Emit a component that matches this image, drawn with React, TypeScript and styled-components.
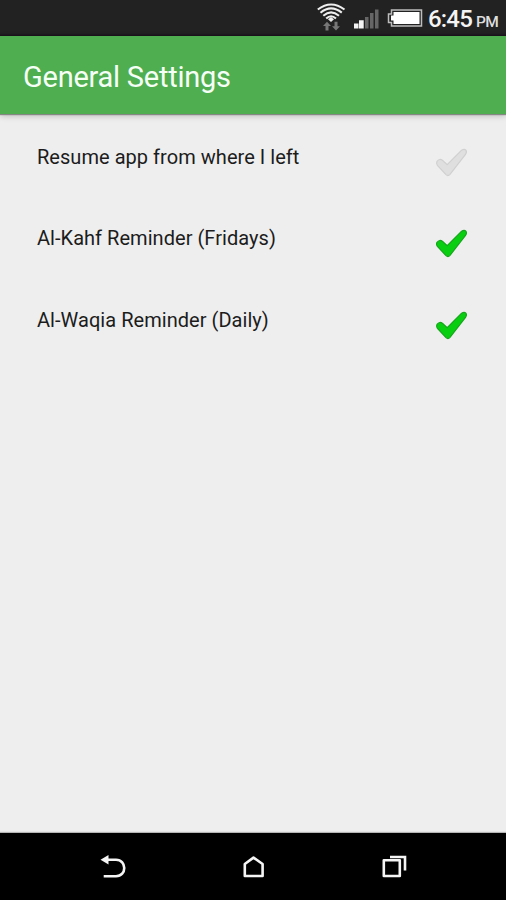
import React from 'react';
import styled, { createGlobalStyle } from 'styled-components';

const GlobalStyle = createGlobalStyle`
  * { box-sizing: border-box; }
  body { margin: 0; background: #eee; }
`;

const Screen = styled.div`
  display: flex;
  flex-direction: column;
  width: 506px;
  height: 900px;
  background: #eeeeee;
  font-family: Roboto, sans-serif;
  overflow: hidden;
`;

const StatusBar = styled.header`
  display: flex;
  flex: none;
  height: 36px;
  background: linear-gradient(#222222 33px, #1a101b 36px);
  padding-left: 316px;
  color: #f4f4f4;
`;

const StatusIcons = styled.svg`
  flex: none;
  width: 110px;
  height: 36px;
`;

const Clock = styled.div`
  display: flex;
  align-items: baseline;
  height: 36px;
  margin-left: 2px;
  line-height: 38px;
  white-space: nowrap;
`;

const Time = styled.span`
  font-size: 24px;
  font-weight: 500;
  letter-spacing: -0.8px;
`;

const Meridiem = styled.span`
  margin-left: 4px;
  color: #dedede;
  font-size: 15.5px;
  font-weight: 500;
  letter-spacing: -0.6px;
`;

const AppBar = styled.div`
  display: flex;
  flex: none;
  align-items: center;
  height: 78px;
  padding: 4px 0 0 23px;
  background: #4fae50;
  box-shadow: 0 1px 1px #858785, 0 2px 6px rgba(0, 0, 0, 0.22);
`;

const Title = styled.h1`
  margin: 0;
  color: #f6fff6;
  font-size: 29px;
  font-weight: 400;
  letter-spacing: -0.25px;
  line-height: 36px;
  white-space: nowrap;
`;

const Options = styled.main`
  display: flex;
  flex: 1;
  flex-direction: column;
  padding-top: 2px;
`;

const Option = styled.label`
  display: flex;
  align-items: flex-start;
  justify-content: space-between;
  height: 81.4px;
  padding: 29px 36px 0 37px;
`;

const OptionLabel = styled.span`
  color: #1c1c1c;
  font-size: 20px;
  line-height: 24px;
  letter-spacing: 0.04px;
  white-space: nowrap;
`;

const Check = styled.svg`
  flex: none;
  width: 36px;
  height: 34px;
`;

const NavBar = styled.nav`
  display: flex;
  flex: none;
  align-items: center;
  justify-content: space-between;
  height: 67px;
  padding: 0 96px;
  background: #000;
  box-shadow: 0 -1px 1px #b5b5b5;
`;

const NavIcon = styled.svg`
  width: 32px;
  height: 32px;
  fill: none;
  stroke: #f5f5f5;
  stroke-width: 2.6;
`;

const options = [
  { label: 'Resume app from where I left', checked: false },
  { label: 'Al-Kahf Reminder (Fridays)', checked: true },
  { label: 'Al-Waqia Reminder (Daily)', checked: true },
];

function CheckMark({ checked }: { checked: boolean }) {
  const edge = checked ? '#16a51b' : '#d0d0d0';
  const face = checked ? '#08cf10' : '#dfdfdf';
  return (
    <Check viewBox="0 0 36 34">
      <path
        d="M3 16.4 Q5.5 13 8.7 15.5 L13.2 19.6 L27.6 5.2 Q30.3 3.4 31.8 5.2 Q33.2 7 31.5 9.3 L15.8 29.6 Q14 31.4 12 29.6 L3.4 20.4 Q1.9 18.4 3 16.4Z"
        fill={face}
        stroke={edge}
        strokeWidth="1.2"
      />
    </Check>
  );
}

export default function App() {
  return (
    <Screen>
      <GlobalStyle />
      <StatusBar>
        <StatusIcons viewBox="316 0 110 36">
          <g fill="none" stroke="#eeeeee" strokeWidth="2.1">
            <path d="M317.8 9.5 Q331 -0.5 344.5 9.5" />
            <path d="M320.5 12.7 Q331 4.2 341.8 12.7" />
            <path d="M323.3 15.7 Q331 9 339 15.7" />
            <path d="M326.2 18.5 Q331 14 336 18.5" />
          </g>
          <path d="M331 17 l3 2.3 l-3 2.7 l-3 -2.7z" fill="#eee" />
          <path d="M327 21.8 l4 4.2 h-2.5 v4.5 h-3 v-4.5 h-2.5z" fill="#777" />
          <path d="M336 30.5 l-4 -4.2 h2.5 v-4.5 h3 v4.5 h2.5z" fill="#777" />
          <path d="M354 23.5h4.5v5h-4.5z M359 20.3h4.7v8.2h-4.7z" fill="#f3f3f3" />
          <path d="M365 17h3.5v11.5h-3.5z M370 13h3.5v15.5h-3.5z M375 9.5h3.5v19h-3.5z" fill="#666" />
          <path
            d="M391.5 10 H421.5 V26 H391.5 V22.5 H388.5 V14 H391.5Z"
            fill="none"
            stroke="#bdbdbd"
            strokeWidth="1.5"
          />
          <path d="M393.5 12 H419.5 V24 H393.5 V20.5 H391 V15.5 H393.5Z" fill="#fff" />
        </StatusIcons>
        <Clock>
          <Time>6:45</Time>
          <Meridiem>PM</Meridiem>
        </Clock>
      </StatusBar>
      <AppBar>
        <Title>General Settings</Title>
      </AppBar>
      <Options>
        {options.map((o) => (
          <Option key={o.label}>
            <OptionLabel>{o.label}</OptionLabel>
            <CheckMark checked={o.checked} />
          </Option>
        ))}
      </Options>
      <NavBar>
        <NavIcon viewBox="96 851 32 32">
          <path d="M107 859.8 H116 C127 859.8 127 876.3 116 876.3 H103.7" />
          <path d="M100.5 859.8 L108.5 855 V864.6Z" fill="#f5f5f5" stroke="none" />
        </NavIcon>
        <NavIcon viewBox="237 851 32 32">
          <path d="M244.8 876 V864 L253.5 857.6 L262.6 864 V876Z" strokeLinejoin="round" />
        </NavIcon>
        <NavIcon viewBox="378 851 32 32">
          <path d="M383.8 860.3 H399.8 V876 H383.8Z" strokeLinejoin="round" />
          <path d="M390 857 H405 V870.5" />
        </NavIcon>
      </NavBar>
    </Screen>
  );
}
